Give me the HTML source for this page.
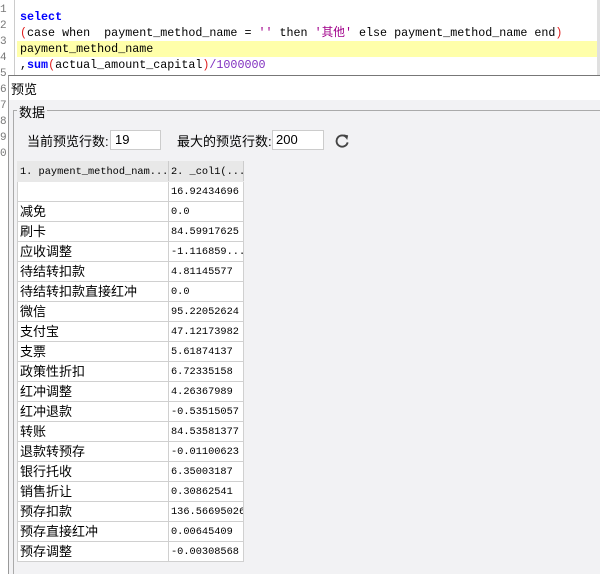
<!DOCTYPE html><html><head><meta charset="utf-8"><style>
*{margin:0;padding:0;box-sizing:border-box}
body{width:600px;height:574px;overflow:hidden;background:#fff;position:relative;font-family:"Liberation Sans","Noto Sans CJK SC",sans-serif;font-size:13px;color:#000}
.ab{position:absolute}
.code{font-family:"Liberation Mono","Noto Sans CJK SC",monospace;font-size:11.7px;line-height:16px;white-space:pre}
.kw{color:#0000ff;font-weight:bold}.s{color:#a0008a}.p{color:#e02020}.n{color:#8030c0}
.ln{font-family:"Liberation Mono",monospace;font-size:11px;color:#777;width:8px;overflow:hidden}
table{border-collapse:collapse;position:absolute;left:17px;top:161px;table-layout:fixed;width:226px}
td{border:1px solid #d0d0d0;height:20px;line-height:18px;padding:0 2px;background:#fff;font-size:13px;white-space:nowrap;overflow:hidden;vertical-align:middle}
td.c2{font-family:"Liberation Mono",monospace;font-size:10.3px;letter-spacing:0px}
tr.h td{background:#e8e8e8;font-family:"Liberation Mono",monospace;font-size:10.3px;border-color:#e8e8e8 #ccc #e8e8e8 #e8e8e8}
</style></head><body>
<div class="ab" style="left:0;top:0;width:15px;height:574px;background:#fff;border-right:1px solid #ccc"></div>
<div class="ab ln" style="left:0;top:2px;line-height:16px">1<br>2<br>3<br>4<br>5<br>6<br>7<br>8<br>9<br>0</div>
<div class="ab" style="left:597px;top:0;width:3px;height:75px;background:#e0e0e0"></div>
<div class="ab" style="left:17px;top:41px;width:580px;height:16px;background:#ffffaa"></div>
<div class="ab code" style="left:20px;top:9px"><span class="kw">select</span>
<span class="p">(</span>case when  payment_method_name = <span class="s">''</span> then <span class="s">'其他'</span> else payment_method_name end<span class="p">)</span>
payment_method_name
,<span class="kw">sum</span><span class="p">(</span>actual_amount_capital<span class="p">)</span><span class="n">/1000000</span></div>
<div class="ab" style="left:8px;top:75px;width:592px;height:499px;background:#f2f2f4;border-top:1px solid #777;border-left:1px solid #999"></div>
<div class="ab" style="left:9px;top:76px;width:591px;height:24px;background:#fff"></div>
<div class="ab" style="left:11px;top:79px;font-size:13px">预览</div>
<div class="ab" style="left:13px;top:110px;width:587px;height:464px;border-top:1px solid #aaa;border-left:1px solid #aaa"></div>
<div class="ab" style="left:17px;top:102px;background:#f2f2f4;padding:0 2px">数据</div>
<div class="ab" style="left:27px;top:131px">当前预览行数:</div>
<div class="ab" style="left:110px;top:130px;width:51px;height:20px;background:#fff;border:1px solid #ccc;padding:1px 4px">19</div>
<div class="ab" style="left:177px;top:131px">最大的预览行数:</div>
<div class="ab" style="left:272px;top:130px;width:52px;height:20px;background:#fff;border:1px solid #ccc;padding:1px 3px">200</div>
<svg class="ab" style="left:335px;top:133px" width="15" height="15" viewBox="0 0 16 16"><path d="M12.5 5A6 6 0 1 0 13.5 10" fill="none" stroke="#444" stroke-width="2"/><path d="M9 1.5L14 2.5 13 7.5Z" fill="#444"/></svg>
<table>
<colgroup><col style="width:151px"><col style="width:75px"></colgroup>
<tr class="h"><td>1. payment_method_nam...</td><td>2. _col1(...</td></tr>
<tr><td></td><td class="c2">16.92434696</td></tr>
<tr><td>减免</td><td class="c2">0.0</td></tr>
<tr><td>刷卡</td><td class="c2">84.59917625</td></tr>
<tr><td>应收调整</td><td class="c2">-1.116859...</td></tr>
<tr><td>待结转扣款</td><td class="c2">4.81145577</td></tr>
<tr><td>待结转扣款直接红冲</td><td class="c2">0.0</td></tr>
<tr><td>微信</td><td class="c2">95.22052624</td></tr>
<tr><td>支付宝</td><td class="c2">47.12173982</td></tr>
<tr><td>支票</td><td class="c2">5.61874137</td></tr>
<tr><td>政策性折扣</td><td class="c2">6.72335158</td></tr>
<tr><td>红冲调整</td><td class="c2">4.26367989</td></tr>
<tr><td>红冲退款</td><td class="c2">-0.53515057</td></tr>
<tr><td>转账</td><td class="c2">84.53581377</td></tr>
<tr><td>退款转预存</td><td class="c2">-0.01100623</td></tr>
<tr><td>银行托收</td><td class="c2">6.35003187</td></tr>
<tr><td>销售折让</td><td class="c2">0.30862541</td></tr>
<tr><td>预存扣款</td><td class="c2">136.56695026</td></tr>
<tr><td>预存直接红冲</td><td class="c2">0.00645409</td></tr>
<tr><td>预存调整</td><td class="c2">-0.00308568</td></tr>
</table>
</body></html>
